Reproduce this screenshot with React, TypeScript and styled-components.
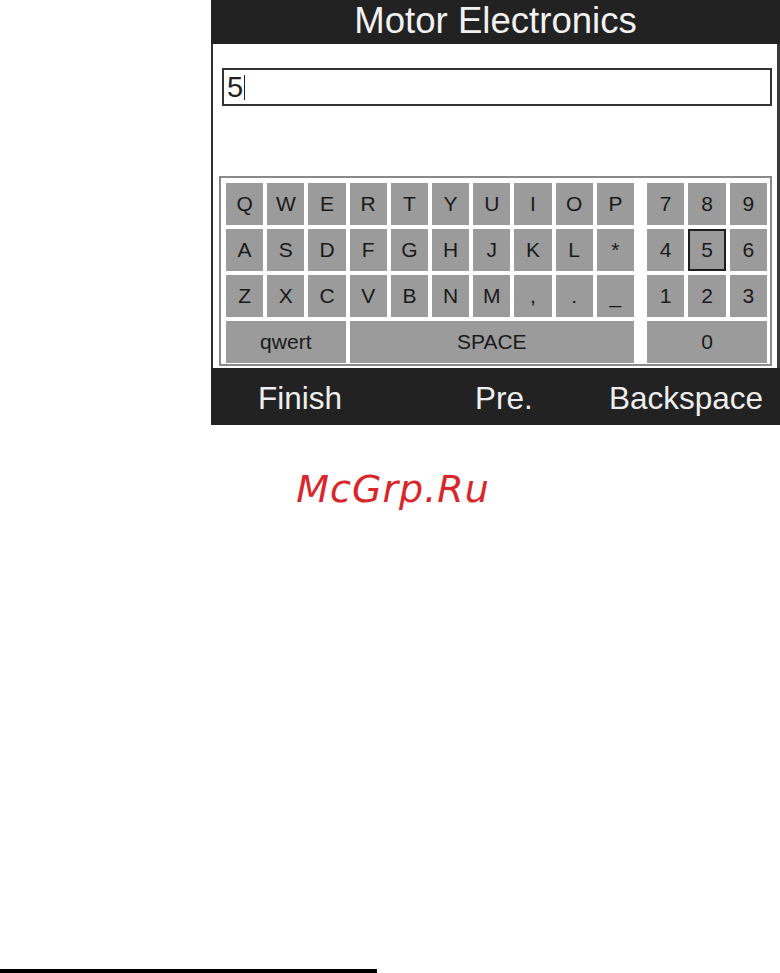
import styled, { createGlobalStyle } from "styled-components";

const GlobalStyle = createGlobalStyle`
  html, body {
    margin: 0;
    padding: 0;
    background: #ffffff;
  }
  body {
    font-family: "Liberation Sans", Arial, sans-serif;
  }
`;

const Page = styled.div`
  width: 780px;
  height: 973px;
  display: flex;
  flex-direction: column;
  overflow: hidden;
`;

const Screen = styled.div`
  margin-left: 211px;
  width: 569px;
  display: flex;
  flex-direction: column;
`;

const TitleBar = styled.div`
  height: 44px;
  background: #222222;
  color: #f2f2f2;
  font-size: 36.6px;
  line-height: 41px;
  text-align: center;
  white-space: nowrap;
`;

const Body = styled.div`
  height: 324px;
  background: #ffffff;
  border-left: 2px solid #333333;
  border-right: 3px solid #3a3a3a;
  padding: 24px 5px 0 6px;
  box-sizing: border-box;
  display: flex;
  flex-direction: column;
`;

const InputBox = styled.div`
  margin-left: 3px;
  height: 38px;
  border: 2px solid #333333;
  box-sizing: border-box;
  display: flex;
  align-items: center;
  padding-left: 3px;
  font-size: 29px;
  color: #222222;
`;

const Caret = styled.span`
  display: inline-block;
  width: 0;
  height: 25px;
  border-left: 1.5px solid #222222;
  margin-left: 1px;
`;

const KeyboardFrame = styled.div`
  margin-top: 70px;
  height: 190px;
  border: 2px solid #8a8a8a;
  box-sizing: border-box;
  padding: 5px 3px 1px 5px;
  display: flex;
  justify-content: space-between;
`;

const KeyGrid = styled.div<{ $cols: number; $width: number }>`
  width: ${(p) => p.$width}px;
  display: grid;
  grid-template-columns: repeat(${(p) => p.$cols}, 1fr);
  grid-template-rows: repeat(4, 42px);
  column-gap: 4px;
  row-gap: 4px;
`;

const Key = styled.div<{ $span?: number; $active?: boolean }>`
  grid-column: span ${(p) => p.$span ?? 1};
  background: #9b9b9b;
  color: #1a1a1a;
  font-size: 21px;
  display: flex;
  align-items: center;
  justify-content: center;
  box-sizing: border-box;
  border: ${(p) => (p.$active ? "2px solid #1e1e1e" : "none")};
`;

const BottomBar = styled.div`
  height: 57px;
  background: #222222;
  display: flex;
  align-items: center;
  padding: 4px 17px 0 47px;
  box-sizing: border-box;
`;

const SoftKey = styled.div<{ $gap?: string }>`
  color: #eeeeee;
  font-size: 31.5px;
  white-space: nowrap;
  margin-left: ${(p) => p.$gap ?? "0"};
`;

const Watermark = styled.div`
  margin-top: 45px;
  padding-left: 6px;
  font-family: "DejaVu Sans", sans-serif;
  font-style: italic;
  font-size: 38px;
  line-height: 38px;
  letter-spacing: 1px;
  color: #d9262b;
  text-align: center;
`;

const FootRule = styled.div`
  margin-top: auto;
  width: 377px;
  height: 4px;
  background: #000000;
`;

const letterRows = [
  ["Q", "W", "E", "R", "T", "Y", "U", "I", "O", "P"],
  ["A", "S", "D", "F", "G", "H", "J", "K", "L", "*"],
  ["Z", "X", "C", "V", "B", "N", "M", ",", ".", "_"],
];

const numberRows = [
  ["7", "8", "9"],
  ["4", "5", "6"],
  ["1", "2", "3"],
];

export default function App() {
  return (
    <>
      <GlobalStyle />
      <Page>
        <Screen>
          <TitleBar>Motor Electronics</TitleBar>
          <Body>
            <InputBox>
              5<Caret />
            </InputBox>
            <KeyboardFrame>
              <KeyGrid $cols={10} $width={408}>
                {letterRows.flat().map((k, i) => (
                  <Key key={i}>{k}</Key>
                ))}
                <Key $span={3}>qwert</Key>
                <Key $span={7}>SPACE</Key>
              </KeyGrid>
              <KeyGrid $cols={3} $width={120}>
                {numberRows.flat().map((k) => (
                  <Key key={k} $active={k === "5"}>
                    {k}
                  </Key>
                ))}
                <Key $span={3}>0</Key>
              </KeyGrid>
            </KeyboardFrame>
          </Body>
          <BottomBar>
            <SoftKey>Finish</SoftKey>
            <SoftKey $gap="133px">Pre.</SoftKey>
            <SoftKey $gap="auto">Backspace</SoftKey>
          </BottomBar>
        </Screen>
        <Watermark>McGrp.Ru</Watermark>
        <FootRule />
      </Page>
    </>
  );
}
